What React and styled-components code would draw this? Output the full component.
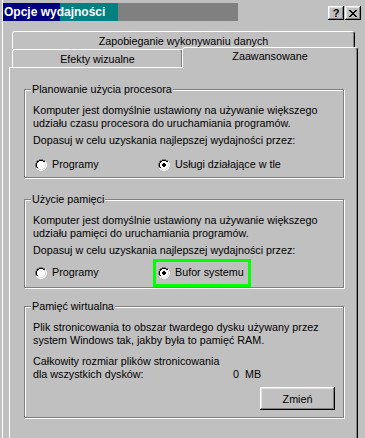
import React from 'react'
import styled, { createGlobalStyle } from 'styled-components'

const GlobalStyle = createGlobalStyle`
  html, body {
    margin: 0;
    padding: 0;
    background: #c0c0c0;
  }
  body {
    font-family: 'Liberation Sans', Arial, sans-serif;
    font-size: 10.75px;
    color: #000;
  }
`

// classic 12x12 radio, drawn pixel by pixel
const RADIO = [
  '....GGGG....',
  '..GGKKKKGG..',
  '.GKKWWWWKKW.',
  '.GKWWWWWWLW.',
  'GKWWWWWWWWLW',
  'GKWWWWWWWWLW',
  'GKWWWWWWWWLW',
  'GKWWWWWWWWLW',
  '.GKWWWWWWLW.',
  '.WLLWWWWLLW.',
  '..WWLLLLWW..',
  '....WWWW....',
]
const DOT = ['.##.', '####', '####', '.##.']
const COLORS = { G: '#808080', K: '#000', W: '#fff', L: '#dfdfdf' }

const RadioIcon = ({ checked }) => (
  <svg width="12" height="12" viewBox="0 0 12 12" shapeRendering="crispEdges">
    {RADIO.map((row, y) =>
      row.split('').map((c, x) =>
        COLORS[c] ? <rect key={`${x}-${y}`} x={x} y={y} width="1" height="1" fill={COLORS[c]} /> : null
      )
    )}
    {checked &&
      DOT.map((row, y) =>
        row.split('').map((c, x) =>
          c === '#' ? <rect key={`d${x}-${y}`} x={x + 4} y={y + 4} width="1" height="1" fill="#000" /> : null
        )
      )}
  </svg>
)

const CLOSE = ['##....##', '.##..##.', '..####..', '...##...', '..####..', '.##..##.', '##....##']

const CloseIcon = () => (
  <svg width="8" height="7" viewBox="0 0 8 7" shapeRendering="crispEdges">
    {CLOSE.map((row, y) =>
      row.split('').map((c, x) =>
        c === '#' ? <rect key={`${x}-${y}`} x={x} y={y} width="1" height="1" fill="#000" /> : null
      )
    )}
  </svg>
)

const Window = styled.div`
  width: 365px;
  height: 438px;
  box-sizing: border-box;
  overflow: hidden;
  padding: 3px 0 0 3px;
  background: #c0c0c0;
  box-shadow: inset 2px 0 #c0c0c0, inset 3px 0 #fff;
`

const TitleBar = styled.div`
  display: flex;
  align-items: flex-start;
  height: 18px;
  padding: 0 4px 0 1px;
  background: linear-gradient(
    to right,
    #000080 0 57px,
    #008080 57px 115px,
    #808080 115px 235px,
    transparent 235px
  );
`

const TitleText = styled.div`
  flex: 1;
  color: #fff;
  font-weight: bold;
  font-size: 12px;
  line-height: 18px;
`

const CaptionButtons = styled.div`
  display: flex;
  gap: 1px;
  margin-top: 3px;
`

const CaptionButton = styled.div`
  width: 16px;
  height: 14px;
  display: flex;
  align-items: center;
  justify-content: center;
  background: #c0c0c0;
  font-weight: bold;
  font-size: 11px;
  line-height: 14px;
  box-shadow: inset -1px -1px #000, inset 1px 1px #fff, inset -2px -2px #808080, inset 2px 2px #dfdfdf;
`

const Body = styled.div`
  padding: 10px 7px 0 6px;
`

const TabStrip = styled.div`
  padding: 0 3px;
`

const TabRow = styled.div`
  display: flex;
  height: 18px;
`

const Tab = styled.div`
  flex: ${p => (p.$width ? `0 0 ${p.$width}px` : '1')};
  box-sizing: border-box;
  height: 18px;
  padding-top: 2px;
  line-height: 15px;
  text-align: center;
  white-space: nowrap;
  background: #c0c0c0;
  border-top: 1px solid #fff;
  border-left: 1px solid #fff;
  border-right: 1px solid #000;
  border-radius: 3px 3px 0 0;
  box-shadow: inset -1px 0 #808080;

  ${p =>
    p.$active &&
    `
    position: relative;
    z-index: 1;
    height: 21px;
    padding-top: 1px;
    margin: -2px -3px -1px -1px;
  `}
`

const Panel = styled.div`
  box-sizing: border-box;
  padding: 15px 13px 40px 14px;
  border-top: 1px solid #fff;
  border-left: 1px solid #fff;
  border-right: 1px solid #000;
  box-shadow: inset -1px 0 #808080;
`

const Group = styled.fieldset`
  margin: ${p => p.$gap || 0}px 0 0;
  padding: 8px 8px ${p => p.$bottom || 6}px;
  min-width: 0;
  border: 1px solid #808080;
  box-shadow: 1px 1px 0 #fff, inset 1px 1px 0 #fff;
`

const Legend = styled.legend`
  margin-left: -2px;
  padding: 0 1px;
  line-height: 13px;
  background: #c0c0c0;
`

const Text = styled.div`
  line-height: 13px;
  margin-top: ${p => p.$gap || 0}px;
  white-space: pre;
`

const RadioRow = styled.div`
  display: grid;
  grid-template-columns: 123px auto;
  padding-left: 2px;
  margin-top: ${p => p.$gap || 11}px;
`

const RadioLabel = styled.label`
  position: relative;
  justify-self: start;
  display: flex;
  align-items: center;
  gap: 5px;
  height: 13px;
  line-height: 13px;

  ${p =>
    p.$highlight &&
    `
    &::after {
      content: '';
      position: absolute;
      inset: -7px -7px -8px -5px;
      border: 3px solid #00ff00;
    }
  `}
`

const SizeRow = styled.div`
  display: grid;
  grid-template-columns: 200px auto;
  line-height: 13px;
  white-space: pre;
`

const ButtonRow = styled.div`
  display: flex;
  justify-content: flex-end;
  margin-top: 6px;
`

const Button = styled.button`
  width: 75px;
  height: 23px;
  padding: 0;
  border: none;
  font: inherit;
  color: #000;
  background: #c0c0c0;
  box-shadow: inset -1px -1px #000, inset 1px 1px #fff, inset -2px -2px #808080, inset 2px 2px #dfdfdf;
`

const Radio = ({ checked, highlight, children }) => (
  <RadioLabel $highlight={highlight}>
    <RadioIcon checked={checked} />
    {children}
  </RadioLabel>
)

export default function App() {
  return (
    <>
      <GlobalStyle />
      <Window>
        <TitleBar>
          <TitleText>Opcje wydajności</TitleText>
          <CaptionButtons>
            <CaptionButton>?</CaptionButton>
            <CaptionButton>
              <CloseIcon />
            </CaptionButton>
          </CaptionButtons>
        </TitleBar>
        <Body>
          <TabStrip>
            <TabRow>
              <Tab>Zapobieganie wykonywaniu danych</Tab>
            </TabRow>
            <TabRow>
              <Tab $width={171}>Efekty wizualne</Tab>
              <Tab $active>Zaawansowane</Tab>
            </TabRow>
          </TabStrip>
          <Panel>
            <Group>
              <Legend>Planowanie użycia procesora</Legend>
              <Text>Komputer jest domyślnie ustawiony na używanie większego</Text>
              <Text>udziału czasu procesora do uruchamiania programów.</Text>
              <Text $gap={4}>Dopasuj w celu uzyskania najlepszej wydajności przez:</Text>
              <RadioRow>
                <Radio>Programy</Radio>
                <Radio checked>Usługi działające w tle</Radio>
              </RadioRow>
            </Group>
            <Group $gap={15} $bottom={8}>
              <Legend>Użycie pamięci</Legend>
              <Text>Komputer jest domyślnie ustawiony na używanie większego</Text>
              <Text>udziału pamięci do uruchamiania programów.</Text>
              <Text $gap={4}>Dopasuj w celu uzyskania najlepszej wydajności przez:</Text>
              <RadioRow $gap={9}>
                <Radio>Programy</Radio>
                <Radio checked highlight>
                  Bufor systemu
                </Radio>
              </RadioRow>
            </Group>
            <Group $gap={12} $bottom={7}>
              <Legend>Pamięć wirtualna</Legend>
              <Text>Plik stronicowania to obszar twardego dysku używany przez</Text>
              <Text>system Windows tak, jakby była to pamięć RAM.</Text>
              <Text $gap={8}>Całkowity rozmiar plików stronicowania</Text>
              <SizeRow>
                <span>dla wszystkich dysków:</span>
                <span>0  MB</span>
              </SizeRow>
              <ButtonRow>
                <Button>Zmień</Button>
              </ButtonRow>
            </Group>
          </Panel>
        </Body>
      </Window>
    </>
  )
}
